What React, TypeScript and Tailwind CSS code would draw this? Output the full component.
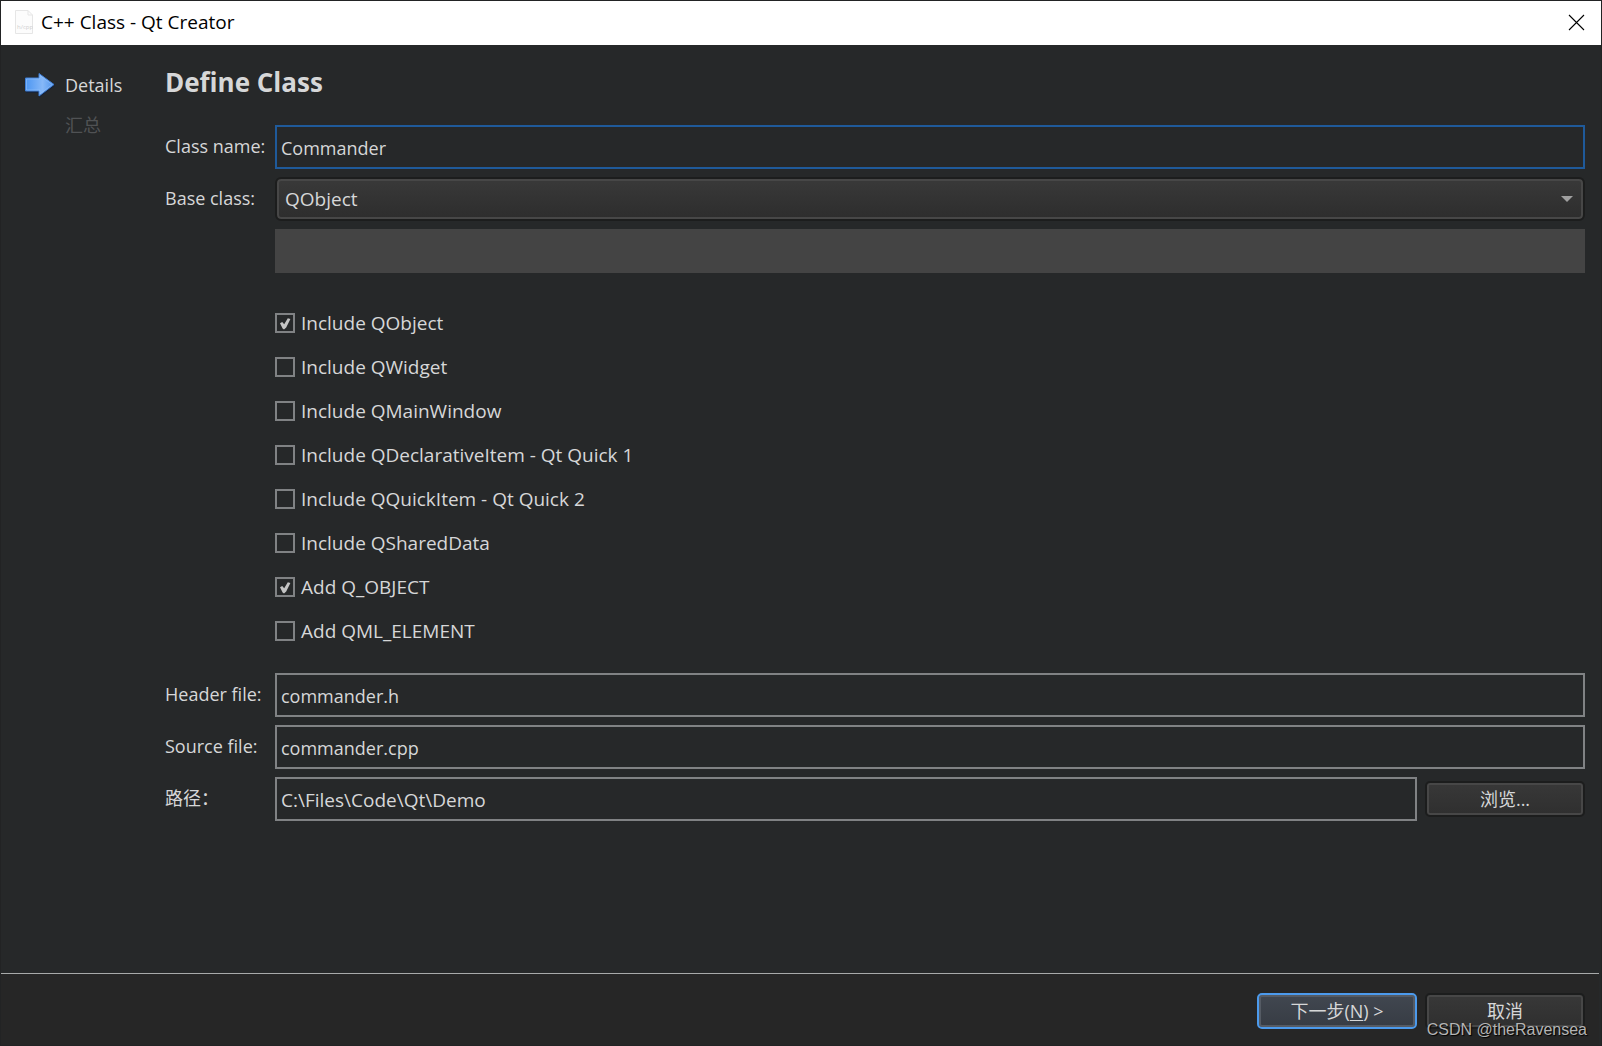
import { useState } from "react";
import type { ReactNode } from "react";

const options = [
    { id: "qobject", label: "Include QObject", checked: true },
    { id: "qwidget", label: "Include QWidget", checked: false },
    { id: "qmainwindow", label: "Include QMainWindow", checked: false },
    { id: "qdeclarativeitem", label: "Include QDeclarativeItem - Qt Quick 1", checked: false },
    { id: "qquickitem", label: "Include QQuickItem - Qt Quick 2", checked: false },
    { id: "qshareddata", label: "Include QSharedData", checked: false },
    { id: "q-object-macro", label: "Add Q_OBJECT", checked: true },
    { id: "qml-element", label: "Add QML_ELEMENT", checked: false },
];

const baseClasses = ["QObject", "QWidget", "QMainWindow", "QDeclarativeItem", "QQuickItem"];

const inputClass = "h-11 w-full min-w-0 border-2 border-[#808284] bg-[#262829] px-1 pt-0.5 outline-none";

function FileIcon() {
    return (
        <svg width="18" height="24" viewBox="0 0 18 24" fill="none" aria-hidden="true">
            <path d="M0.5 0.5H13L17.5 5V23.5H0.5Z" fill="#fcfcfc" stroke="#e6e6e6" />
            <path d="M13 0.5V5H17.5" stroke="#e6e6e6" />
            <text x="2" y="19" fontSize="6" fontFamily="Open Sans, sans-serif" fill="#d0d0d0">h/cpp</text>
        </svg>
    );
}

function StepArrow() {
    return (
        <svg width="32" height="28" viewBox="0 0 32 28" aria-hidden="true">
            <defs>
                <linearGradient id="arrowFill" x1="0" y1="0" x2="1" y2="0">
                    <stop offset="0" stopColor="#4c96f2" />
                    <stop offset="0.6" stopColor="#86b8f8" />
                    <stop offset="1" stopColor="#4f94ec" />
                </linearGradient>
            </defs>
            <path d="M1 9H14V4L30 15L14 27V22H1Z" fill="#14213a" opacity="0.7" />
            <path d="M0.5 7H14V2.5L29 13.5L14 25V20H0.5Z" fill="url(#arrowFill)" stroke="#3f7fd6" strokeLinejoin="round" />
            <path d="M1.5 8H15V4.5L27.3 13.5L15 23V19H1.5Z" fill="none" stroke="#94c1fa" strokeOpacity="0.6" />
        </svg>
    );
}

function Row({ label, htmlFor, children }: { label: string; htmlFor: string; children: ReactNode }) {
    return (
        <div className="flex items-center">
            <label htmlFor={htmlFor} className="w-[110px] shrink-0 pb-0.5 whitespace-nowrap">
                {label}
            </label>
            <div className="flex min-w-0 flex-1 items-center gap-2">{children}</div>
        </div>
    );
}

function Button({ primary, children }: { primary?: boolean; children: ReactNode }) {
    return (
        <button
            type="button"
            className={
                primary
                    ? "h-9 w-40 shrink-0 rounded-[5px] border-2 border-[#4c9aec] bg-linear-to-b from-[#414750] to-[#373c44] inset-ring-2 inset-ring-[#555b64]"
                    : "h-9 w-40 shrink-0 rounded-[5px] border-2 border-[#1c1d1d] bg-linear-to-b from-[#383838] to-[#2f2f2f] inset-ring-2 inset-ring-[#474747]"
            }
        >
            {children}
        </button>
    );
}

export default function App() {
    const [className, setClassName] = useState("Commander");
    const [baseClass, setBaseClass] = useState("QObject");
    const [header, setHeader] = useState("commander.h");
    const [source, setSource] = useState("commander.cpp");
    const [path, setPath] = useState("C:\\Files\\Code\\Qt\\Demo");
    const [checked, setChecked] = useState(options.filter((o) => o.checked).map((o) => o.id));

    const toggle = (id: string) => {
        setChecked(checked.includes(id) ? checked.filter((c) => c !== id) : [...checked, id]);
    };

    return (
        <div className="flex min-h-screen flex-col border border-[#222324] bg-[#262829] font-['Open_Sans','Noto_Sans_CJK_SC',sans-serif] text-[18px] leading-6 text-[#d6d7d8]">
            <header className="flex h-11 items-center bg-white pr-4 pb-0.5 pl-3.5 text-black">
                <FileIcon />
                <h1 className="ml-2 flex-1 text-[19px]">C++ Class - Qt Creator</h1>
                <button type="button" aria-label="Close">
                    <svg width="17" height="17" viewBox="0 0 17 17" stroke="black" strokeWidth="1.1">
                        <path d="M1 1L16 16M16 1L1 16" />
                    </svg>
                </button>
            </header>

            <main className="flex flex-1 pr-4">
                <nav className="w-[164px] shrink-0 pt-5 pl-6">
                    <ol>
                        <li className="flex h-10 items-center gap-2">
                            <StepArrow />
                            Details
                        </li>
                        <li className="flex h-10 items-center pl-10 text-[#505254]">汇总</li>
                    </ol>
                </nav>

                <form className="flex min-w-0 flex-1 flex-col gap-2" onSubmit={(e) => e.preventDefault()}>
                    <h2 className="mt-5 mb-[18px] text-[26px] leading-[34px] font-bold">Define Class</h2>

                    <Row label="Class name:" htmlFor="class-name">
                        <input
                            id="class-name"
                            className="h-11 w-full min-w-0 border-2 border-[#1f5a9a] bg-[#262829] px-1 pt-0.5 outline-none"
                            value={className}
                            onChange={(e) => setClassName(e.target.value)}
                        />
                    </Row>
                    <Row label="Base class:" htmlFor="base-class">
                        <div className="relative flex-1">
                            <select
                                id="base-class"
                                className="block h-11 w-full appearance-none rounded-md border-2 border-[#1c1d1d] bg-linear-to-b from-[#393939] to-[#2d2d2d] px-2 text-[19px] inset-ring-2 inset-ring-[#474747] outline-none"
                                value={baseClass}
                                onChange={(e) => setBaseClass(e.target.value)}
                            >
                                {baseClasses.map((name) => (
                                    <option key={name}>{name}</option>
                                ))}
                            </select>
                            <svg className="pointer-events-none absolute top-[19px] right-3" width="12" height="6" viewBox="0 0 12 6" fill="#a0a0a0">
                                <path d="M0 0H12L6 6Z" />
                            </svg>
                        </div>
                    </Row>
                    <input aria-label="Custom base class" disabled className="ml-[110px] h-11 bg-[#444444]" />

                    <div className="mt-5 mb-3 ml-[110px] text-[19px]">
                        {options.map((option) => (
                            <div key={option.id} className="flex h-11 items-center">
                                <div className="relative size-5">
                                    <input
                                        id={option.id}
                                        type="checkbox"
                                        className="peer block size-5 appearance-none border-2 border-[#808284]"
                                        checked={checked.includes(option.id)}
                                        onChange={() => toggle(option.id)}
                                    />
                                    <svg
                                        className="pointer-events-none absolute inset-0 hidden peer-checked:block"
                                        viewBox="0 0 20 20"
                                        fill="#c4c4c4"
                                    >
                                        <path d="M5 10.2L7.2 9L9.2 11.2L12.8 5.2L15.4 6L11.2 14.6L9 16.6L7.6 15.6Z" />
                                    </svg>
                                </div>
                                <label htmlFor={option.id} className="pl-1.5">
                                    {option.label}
                                </label>
                            </div>
                        ))}
                    </div>

                    <Row label="Header file:" htmlFor="header-file">
                        <input id="header-file" className={inputClass} value={header} onChange={(e) => setHeader(e.target.value)} />
                    </Row>
                    <Row label="Source file:" htmlFor="source-file">
                        <input id="source-file" className={inputClass} value={source} onChange={(e) => setSource(e.target.value)} />
                    </Row>
                    <Row label="路径：" htmlFor="path">
                        <input id="path" className={`${inputClass} text-[19px]`} value={path} onChange={(e) => setPath(e.target.value)} />
                        <Button>浏览...</Button>
                    </Row>
                </form>
            </main>

            <footer className="relative mr-0.5 flex justify-end gap-2 border-t border-[#a8aaaa] bg-[#262626] pt-[19px] pr-3.5 pb-4">
                <Button primary>
                    下一步(<u className="underline-offset-2">N</u>) &gt;
                </Button>
                <Button>取消</Button>
                <span className="pointer-events-none absolute right-3 bottom-[3px] font-['Liberation_Sans',sans-serif] text-[16px] text-[#b4b4b4] text-shadow-[1px_1px_1px_#000000]">
                    CSDN @theRavensea
                </span>
            </footer>
        </div>
    );
}
